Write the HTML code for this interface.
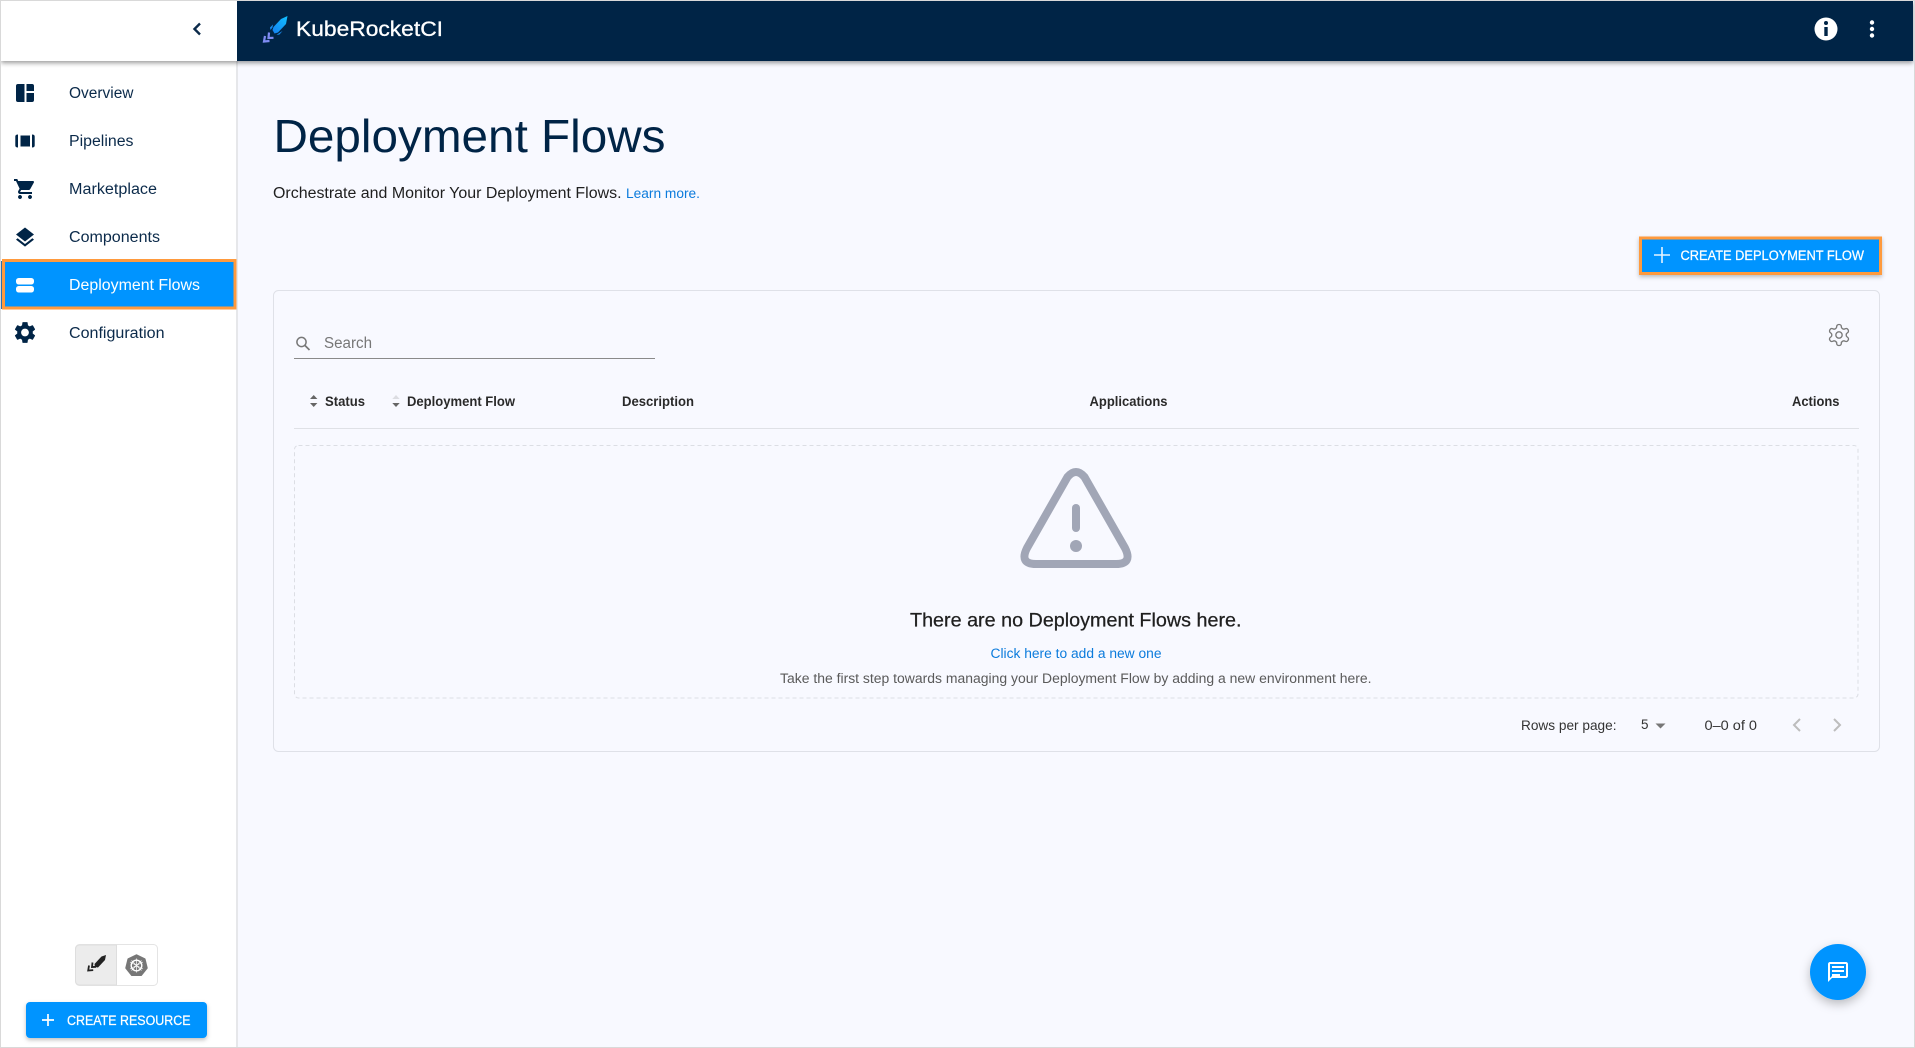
<!DOCTYPE html>
<html lang="en">
<head>
<meta charset="utf-8">
<title>Deployment Flows</title>
<style>
html,body{margin:0;padding:0;background:#f8f9ff;width:1915px;height:1048px;overflow:hidden}
svg{display:block;position:absolute;left:0;top:0}
text{font-family:"Liberation Sans",Arial,sans-serif}
.nav{font-size:15.5px;fill:#0b2a4a}
.th{font-size:13.5px;font-weight:700;fill:#2a2a2a}
.btn{font-size:13.5px;fill:#fff;stroke:#fff;stroke-width:.25}
.sm{font-size:14px;fill:#333}
</style>
</head>
<body>
<svg width="1915" height="1048" viewBox="0 0 1915 1048" xmlns="http://www.w3.org/2000/svg">
<defs>
<linearGradient id="lg" x1="287" y1="16" x2="270" y2="35" gradientUnits="userSpaceOnUse">
<stop offset="0" stop-color="#12c0ff"/><stop offset="1" stop-color="#1478f0"/>
</linearGradient>
<filter id="sh" x="-10%" y="-30%" width="120%" height="180%"><feDropShadow dx="0" dy="2" stdDeviation="2.5" flood-color="#000" flood-opacity=".4"/></filter>
<filter id="bs" x="-10%" y="-30%" width="120%" height="170%"><feDropShadow dx="0" dy="2" stdDeviation="2" flood-color="#000" flood-opacity=".25"/></filter>
<filter id="fs" x="-40%" y="-40%" width="180%" height="190%"><feDropShadow dx="0" dy="4" stdDeviation="5" flood-color="#000" flood-opacity=".25"/></filter>
</defs>

<!-- page -->
<rect width="1915" height="1048" fill="#f8f9ff"/>

<!-- sidebar -->
<rect x="1" y="1" width="235" height="1046" fill="#fff"/>
<rect x="236" y="1" width="2" height="1046" fill="#e6e7ea"/>

<!-- header blocks -->
<rect x="1" y="1" width="1912" height="60" fill="#fff" filter="url(#sh)"/>
<rect x="237" y="1" width="1676" height="60" fill="#002446"/>
<path d="M200 23.500l-5.500 5.500 5.500 5.500" fill="none" stroke="#0b2a4a" stroke-width="2.400"/>

<!-- logo -->
<path d="M287.500 16L286 24l-8 8.500-3.500 1-2-3.500 1-3 7.500-8z" fill="url(#lg)"/>
<path d="M273 24.500l-3 3 .5 2.500 2-2.500zM282.500 31l-4 2.500-2 1.500 3-.5z" fill="#1a8cf0"/>
<path d="M269 32.500l-.5 5.500 5-.2M265 36l-1 5.500 5.500-.5" fill="none" stroke="#7f8cf3" stroke-width="2.200"/>
<text x="296" y="36" font-size="21" fill="#fff" stroke="#fff" stroke-width=".3" textLength="147" lengthAdjust="spacingAndGlyphs">KubeRocketCI</text>

<!-- header right icons -->
<circle cx="1826" cy="29" r="11.500" fill="#fff"/>
<rect x="1824.300" y="27" width="3.400" height="9" fill="#002446"/>
<circle cx="1826" cy="23" r="2" fill="#002446"/>
<circle cx="1872" cy="22.500" r="2.200" fill="#fff"/><circle cx="1872" cy="29" r="2.200" fill="#fff"/><circle cx="1872" cy="35.500" r="2.200" fill="#fff"/>

<!-- nav icons -->
<path d="M18 84h6.500v18H18a2 2 0 0 1-2-2V86a2 2 0 0 1 2-2zM26.500 84H32a2 2 0 0 1 2 2v5h-7.500zM26.500 93H34v7a2 2 0 0 1-2 2h-5.500z" fill="#002446"/>
<path d="M15.300 136.500q0-2 2.700-2v13q-2.700 0-2.700-2zM34.700 136.500q0-2-2.700-2v13q2.700 0 2.700-2zM20.500 135.500H30v11h-9.500z" fill="#002446"/>
<path transform="translate(13 177)" fill="#002446" d="M7 18c-1.100 0-1.990.9-1.990 2S5.900 22 7 22s2-.9 2-2-.9-2-2-2zM1 2v2h2l3.600 7.590-1.350 2.450c-.16.28-.25.61-.25.96 0 1.100.9 2 2 2h12v-2H7.420c-.14 0-.25-.11-.25-.25l.03-.12.9-1.630h7.450c.75 0 1.410-.41 1.750-1.030l3.580-6.490c.08-.14.12-.31.12-.48 0-.55-.45-1-1-1H5.210l-.94-2H1zm16 16c-1.100 0-1.990.9-1.990 2s.89 2 1.990 2 2-.9 2-2-.9-2-2-2z"/>
<path transform="translate(13 225.500)" fill="#002446" d="M11.990 18.540l-7.370-5.730L3 14.070l9 7 9-7-1.630-1.270-7.380 5.740zM12 16l7.360-5.730L21 9l-9-7-9 7 1.630 1.270L12 16z"/>
<path transform="translate(25 332.500) scale(1.080) translate(-12 -12)" fill="#002446" d="M19.140 12.940c.04-.3.060-.61.060-.94 0-.32-.02-.64-.07-.94l2.030-1.580c.18-.14.23-.41.12-.61l-1.920-3.320c-.12-.22-.37-.29-.59-.22l-2.390.96c-.5-.38-1.030-.7-1.620-.94l-.36-2.540c-.04-.24-.24-.41-.48-.41h-3.840c-.24 0-.43.17-.47.41l-.36 2.540c-.59.24-1.130.57-1.620.94l-2.390-.96c-.22-.08-.47 0-.59.22L2.740 8.870c-.12.21-.08.47.12.61l2.030 1.580c-.05.3-.09.63-.09.94s.02.64.07.94l-2.030 1.580c-.18.14-.23.41-.12.61l1.920 3.320c.12.22.37.29.59.22l2.390-.96c.5.38 1.030.7 1.620.94l.36 2.540c.05.24.24.41.48.41h3.840c.24 0 .44-.17.47-.41l.36-2.540c.59-.24 1.130-.56 1.620-.94l2.390.96c.22.08.47 0 .59-.22l1.920-3.320c.12-.22.07-.47-.12-.61l-2.010-1.580zM12 15.600c-1.980 0-3.600-1.620-3.600-3.600s1.620-3.600 3.600-3.600 3.600 1.620 3.600 3.600-1.620 3.600-3.600 3.600z"/>

<!-- active nav -->
<rect x="1" y="261" width="235" height="48" fill="#0094ff"/>
<rect x="1" y="261" width="1" height="48" fill="#2a6fb0"/>
<rect x="3.500" y="260.500" width="231.500" height="47.500" fill="#0094ff" stroke="#ff9a3d" stroke-width="3"/>
<rect x="16" y="278" width="18" height="6.500" rx="2.700" fill="#fff"/>
<rect x="16" y="286" width="18" height="6.500" rx="2.700" fill="#fff"/>

<!-- nav text -->
<text class="nav" x="69" y="98" textLength="64.500" lengthAdjust="spacingAndGlyphs">Overview</text>
<text class="nav" x="69" y="146" textLength="64.500" lengthAdjust="spacingAndGlyphs">Pipelines</text>
<text class="nav" x="69" y="194" textLength="88" lengthAdjust="spacingAndGlyphs">Marketplace</text>
<text class="nav" x="69" y="242" textLength="91" lengthAdjust="spacingAndGlyphs">Components</text>
<text class="nav" x="69" y="290" style="fill:#fff" textLength="131" lengthAdjust="spacingAndGlyphs">Deployment Flows</text>
<text class="nav" x="69" y="338" textLength="95.500" lengthAdjust="spacingAndGlyphs">Configuration</text>

<!-- sidebar bottom toggle -->
<rect x="75.500" y="944.500" width="82" height="41" rx="4" fill="#fff" stroke="#e4e4e4"/>
<path d="M116.500 945H79.500a4 4 0 0 0-4 4v32a4 4 0 0 0 4 4h37z" fill="#ececec" stroke="#dedede"/>
<path d="M106 955l-1 5-7 7.500-3-.5-.5-3 7-7.500z" fill="#222"/>
<path d="M92.500 962.500l-.5 4.500 4-.2M89 965.500l-.8 5 5-.4" fill="none" stroke="#222" stroke-width="1.800"/>
<path d="M136.500 955l8.300 4 2.200 9-5.800 7.300h-9.400L126 968l2.200-9z" fill="#777" stroke="#777" stroke-width="1.500" stroke-linejoin="round"/>
<circle cx="136.500" cy="965.500" r="5.300" fill="none" stroke="#fff" stroke-width="1.400"/>
<path d="M136.500 958.500v14M130 962l13 7M143 962l-13 7M131.500 970.500l10-10M141.500 970.500l-10-10" stroke="#fff" stroke-width=".7"/>

<!-- create resource -->
<rect x="26" y="1002" width="181" height="36" rx="4" fill="#0094ff" filter="url(#bs)"/>
<path d="M42 1020h12M48 1014v12" stroke="#fff" stroke-width="1.700"/>
<text class="btn" x="67" y="1025" textLength="123.500" lengthAdjust="spacingAndGlyphs">CREATE RESOURCE</text>

<!-- heading -->
<text x="273.500" y="152" font-size="46.500" fill="#002446" textLength="392" lengthAdjust="spacingAndGlyphs">Deployment Flows</text>
<text x="273" y="198" font-size="15.500" fill="#1f1f1f" textLength="348.500" lengthAdjust="spacingAndGlyphs">Orchestrate and Monitor Your Deployment Flows.</text>
<text x="626" y="198" font-size="13.500" fill="#0b7bdc" textLength="74" lengthAdjust="spacingAndGlyphs">Learn more.</text>

<!-- create deployment flow -->
<rect x="1640.500" y="238" width="240" height="35.500" fill="#0094ff" stroke="#ff9a3d" stroke-width="3" filter="url(#bs)"/>
<path d="M1654 255h16M1662 247v16" stroke="#e6f4ff" stroke-width="1.600"/>
<text class="btn" x="1680.500" y="260" textLength="183.500" lengthAdjust="spacingAndGlyphs">CREATE DEPLOYMENT FLOW</text>

<!-- card -->
<rect x="273.500" y="290.500" width="1606" height="461" rx="5" fill="#f8f9ff" stroke="#dfe1e8"/>

<!-- search -->
<circle cx="301.500" cy="342" r="4.600" fill="none" stroke="#777" stroke-width="1.500"/>
<path d="M305 345.500l4.500 4.500" stroke="#777" stroke-width="1.700"/>
<text x="324" y="348" font-size="15.500" fill="#777" textLength="48" lengthAdjust="spacingAndGlyphs">Search</text>
<rect x="294" y="358" width="361" height="1" fill="#8a8a8a"/>

<!-- table settings -->
<g transform="translate(1839 335) scale(1.050) translate(-12 -12)" fill="none" stroke="#7a7a7a" stroke-width="1.300">
<path d="M12.220 2h-.44a2 2 0 0 0-2 2v.18a2 2 0 0 1-1 1.730l-.43.25a2 2 0 0 1-2 0l-.15-.08a2 2 0 0 0-2.730.73l-.22.38a2 2 0 0 0 .73 2.730l.15.1a2 2 0 0 1 1 1.720v.51a2 2 0 0 1-1 1.740l-.15.09a2 2 0 0 0-.73 2.730l.22.38a2 2 0 0 0 2.730.73l.15-.08a2 2 0 0 1 2 0l.43.25a2 2 0 0 1 1 1.730V20a2 2 0 0 0 2 2h.44a2 2 0 0 0 2-2v-.18a2 2 0 0 1 1-1.730l.43-.25a2 2 0 0 1 2 0l.15.08a2 2 0 0 0 2.730-.73l.22-.39a2 2 0 0 0-.73-2.730l-.15-.08a2 2 0 0 1-1-1.740v-.5a2 2 0 0 1 1-1.740l.15-.09a2 2 0 0 0 .73-2.730l-.22-.38a2 2 0 0 0-2.730-.73l-.15.08a2 2 0 0 1-2 0l-.43-.25a2 2 0 0 1-1-1.730V4a2 2 0 0 0-2-2z"/>
<circle cx="12" cy="12" r="3"/>
</g>

<!-- table header -->
<path d="M310 399l3.700-4 3.700 4z" fill="#666"/><path d="M310 403l3.700 4 3.700-4z" fill="#666"/>
<path d="M392.300 399l3.700-4 3.700 4z" fill="#dcdde2"/><path d="M392.300 403l3.700 4 3.700-4z" fill="#666"/>
<text class="th" x="325" y="406" textLength="40" lengthAdjust="spacingAndGlyphs">Status</text>
<text class="th" x="407" y="406" textLength="108" lengthAdjust="spacingAndGlyphs">Deployment Flow</text>
<text class="th" x="622" y="406" textLength="72" lengthAdjust="spacingAndGlyphs">Description</text>
<text class="th" x="1089.500" y="406" textLength="78" lengthAdjust="spacingAndGlyphs">Applications</text>
<text class="th" x="1792" y="406" textLength="47.500" lengthAdjust="spacingAndGlyphs">Actions</text>
<rect x="294" y="428" width="1565" height="1" fill="#dfe1e6"/>

<!-- empty state -->
<rect x="294.500" y="445.500" width="1563.500" height="252.500" rx="4" fill="none" stroke="#dcdee4" stroke-dasharray="4 3"/>
<path d="M1067.500 477L1027 548Q1019 564 1036 564H1116Q1133 564 1125 548L1084.500 477Q1076 467 1067.500 477Z" fill="none" stroke="#a1a6b6" stroke-width="8" stroke-linejoin="round"/>
<rect x="1072" y="504" width="8" height="28" rx="4" fill="#a1a6b6"/>
<circle cx="1076" cy="546" r="6" fill="#a1a6b6"/>
<text x="910" y="626.500" font-size="19.500" fill="#1f1f1f" stroke="#1f1f1f" stroke-width=".25" textLength="331.500" lengthAdjust="spacingAndGlyphs">There are no Deployment Flows here.</text>
<text x="990.500" y="658" font-size="13.500" fill="#0b7bdc" textLength="171" lengthAdjust="spacingAndGlyphs">Click here to add a new one</text>
<text x="780" y="683" font-size="13.500" fill="#5a5a5a" textLength="591.500" lengthAdjust="spacingAndGlyphs">Take the first step towards managing your Deployment Flow by adding a new environment here.</text>

<!-- pagination -->
<text class="sm" x="1521" y="730" font-size="13.500" textLength="95.500" lengthAdjust="spacingAndGlyphs">Rows per page:</text>
<text class="sm" x="1641" y="729" textLength="7.500" lengthAdjust="spacingAndGlyphs">5</text>
<path d="M1655.500 723.500h10l-5 5z" fill="#777"/>
<text class="sm" x="1704.500" y="730" textLength="52.500" lengthAdjust="spacingAndGlyphs">0–0 of 0</text>
<path d="M1800 719l-6 6 6 6" fill="none" stroke="#bdbdbd" stroke-width="2"/>
<path d="M1834 719l6 6-6 6" fill="none" stroke="#bdbdbd" stroke-width="2"/>

<!-- FAB -->
<circle cx="1838" cy="972" r="28" fill="#0094ff" filter="url(#fs)"/>
<path transform="translate(1826 960)" fill="#fff" d="M20 2H4c-1.100 0-2 .9-2 2v18l4-4h14c1.100 0 2-.9 2-2V4c0-1.100-.9-2-2-2zm0 14H6l-2 2V4h16v12z"/>
<rect x="1832" y="966" width="12" height="2" fill="#fff"/>
<rect x="1832" y="970" width="12" height="2" fill="#fff"/>
<rect x="1832" y="974" width="8" height="2" fill="#fff"/>

<!-- screenshot frame -->
<rect x="0" y="0" width="1915" height="1" fill="#d9d9d9"/>
<rect x="0" y="0" width="1" height="1048" fill="#d9d9d9"/>
<rect x="0" y="1047" width="1915" height="1" fill="#d9d9d9"/>
<rect x="1914" y="0" width="1" height="1048" fill="#d9d9d9"/>
</svg>
</body>
</html>
